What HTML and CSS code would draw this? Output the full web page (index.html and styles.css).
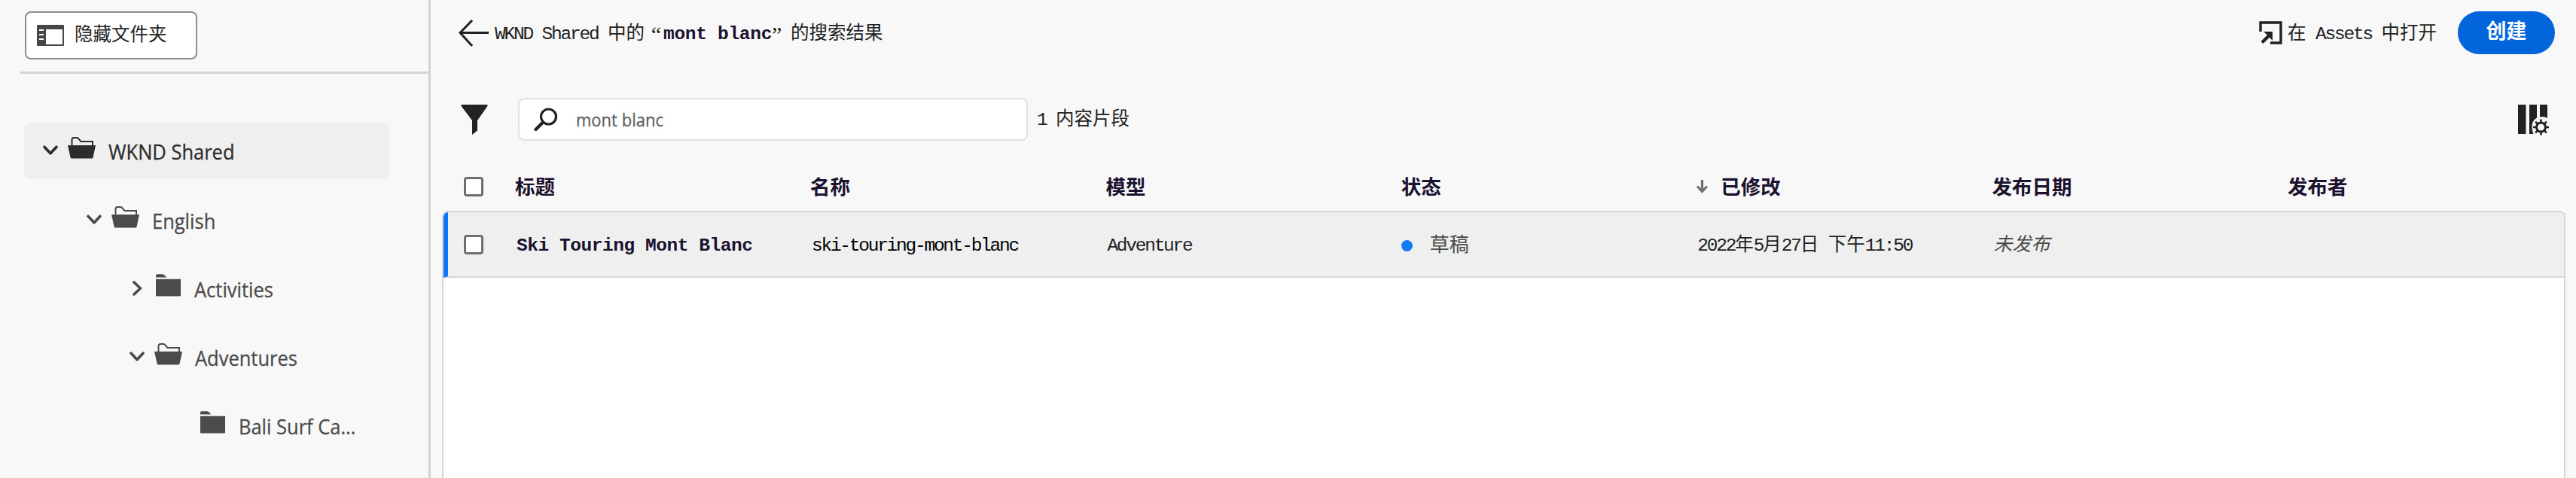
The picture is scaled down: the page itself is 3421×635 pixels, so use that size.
FILE: index.html
```html
<!DOCTYPE html>
<html lang="zh-CN">
<head>
<meta charset="utf-8">
<title>内容片段</title>
<link rel="stylesheet" href="styles.css">
</head>
<body>
<svg class="defs" width="0" height="0">
  <symbol id="open" viewBox="0 0 37 30"><path d="M5.500 13V5q0-3 2.500-3h4q1.200 0 2 1l3.500 4H33v6" fill="none" stroke="currentColor" stroke-width="2"/><path d="M0 12h37l-3.500 16.500q-.3 1-1.300 1H5q-1 0-1.300-1z" fill="currentColor"/></symbol>
  <symbol id="closed" viewBox="0 0 33 30"><path d="M0 4.500V2.200Q0 .2 2 .2h7q1 0 1.800.8L14.500 4.500zM0 6.700h33V28.500q0 1-1 1H1q-1 0-1-1z" fill="currentColor"/></symbol>
  <symbol id="down" viewBox="0 0 20 14"><path d="M2 2.200l8 8.600 8-8.600" fill="none" stroke="currentColor" stroke-width="3.600" stroke-linecap="round" stroke-linejoin="round"/></symbol>
  <symbol id="right" viewBox="0 0 14 20"><path d="M3 2l8.500 8L3 18" fill="none" stroke="currentColor" stroke-width="3.600" stroke-linecap="round" stroke-linejoin="round"/></symbol>
</svg>
<div class="app">
  <aside class="sidebar">
    <div class="side-top">
      <button class="hide-btn">
        <svg width="36" height="28" viewBox="0 0 36 28"><path fill="#464646" fill-rule="evenodd" d="M1 0h34q1 0 1 1v26q0 1-1 1H1q-1 0-1-1V1q0-1 1-1zm11 6v20h22V6zM3 6v2h6V6zm0 6v2h6v-2zm0 6v2h6v-2z"/></svg>
        <span>隐藏文件夹</span>
      </button>
    </div>
    <nav class="tree">
      <div class="node lvl0 selected"><svg class="chev"><use href="#down"/></svg><svg class="folder"><use href="#open"/></svg><span class="label">WKND Shared</span></div>
      <div class="node lvl1"><svg class="chev"><use href="#down"/></svg><svg class="folder"><use href="#open"/></svg><span class="label">English</span></div>
      <div class="node lvl2"><svg class="chev side"><use href="#right"/></svg><svg class="folder shut"><use href="#closed"/></svg><span class="label">Activities</span></div>
      <div class="node lvl2"><svg class="chev"><use href="#down"/></svg><svg class="folder"><use href="#open"/></svg><span class="label">Adventures</span></div>
      <div class="node lvl3"><svg class="folder shut"><use href="#closed"/></svg><span class="label">Bali Surf Ca…</span></div>
    </nav>
  </aside>
  <main class="main">
    <header class="topbar">
      <svg class="back" width="40" height="36" viewBox="0 0 40 36"><path d="M18 1L2 17.500l16 17.500M2 17.500h38" fill="none" stroke="#222" stroke-width="3"/></svg>
      <h1 class="title"><span class="lat">WKND Shared </span><span>中的</span><span class="quote start">“</span><b>mont blanc</b><span class="quote">”</span><span>的搜索结果</span></h1>
      <a class="open-assets">
        <svg width="31" height="31" viewBox="0 0 31 31"><path d="M2 14V2h27v27H15" fill="none" stroke="#222" stroke-width="3.400"/><path d="M6 14h12v12l-4-4.200-8.500 8.200-3-3L11 18.500z" fill="#222"/></svg>
        <span>在<span class="lat"> Assets </span>中打开</span>
      </a>
      <button class="create">创建</button>
    </header>
    <div class="toolbar">
      <svg width="36" height="40" viewBox="0 0 36 40"><path d="M1 0h34q1 1 .4 2L22 21v13.500L15 40V21L.6 2Q0 1 1 0z" fill="#222"/></svg>
      <div class="search">
        <svg width="32" height="32" viewBox="0 0 32 32"><circle cx="19.500" cy="12" r="10" fill="none" stroke="#222" stroke-width="3.200"/><path d="M12 19.500L2.500 29" stroke="#222" stroke-width="4.200" stroke-linecap="round"/></svg>
        <span class="query">mont blanc</span>
      </div>
      <span class="count"><span class="lat">1 </span>内容片段</span>
      <svg class="cols" width="41" height="41" viewBox="0 0 41 41"><path d="M0 0h10.500v39H0zM15 0h10v17.500q-7 4-6.500 13 .2 4 2 8.500H15zM29 0h10v18q-4-2.800-10-1.500z" fill="#222"/><circle cx="30.500" cy="30" r="6" fill="none" stroke="#222" stroke-width="3"/><path d="M30.500 19.500v5M30.500 35.500v5M20 30h5M36 30h5M23.100 22.600l3.300 3.300M34.600 34.100l3.300 3.300M37.900 22.600l-3.300 3.300M26.400 34.100l-3.300 3.300" stroke="#222" stroke-width="2.600"/></svg>
    </div>
    <div class="grid head">
      <span class="box"></span><span>标题</span><span>名称</span><span>模型</span><span>状态</span>
      <span class="sorted"><svg width="15" height="18" viewBox="0 0 15 18"><path d="M7.500 1v14M2 9.500l5.500 6 5.500-6" fill="none" stroke="#6e6e6e" stroke-width="3.200" stroke-linecap="round"/></svg><span>已修改</span></span>
      <span>发布日期</span><span>发布者</span>
    </div>
    <section class="table">
      <div class="grid row">
        <span class="box"></span>
        <b class="name">Ski Touring Mont Blanc</b>
        <span class="slug">ski-touring-mont-blanc</span>
        <span class="model">Adventure</span>
        <span class="status"><i class="dot"></i><span>草稿</span></span>
        <span class="date"><span class="lat">2022</span>年<span class="lat">5</span>月<span class="lat">27</span>日<span class="lat"> </span>下午<span class="lat">11:50</span></span>
        <em>未发布</em>
      </div>
    </section>
  </main>
</div>
</body>
</html>
```
FILE: styles.css
```css
* { box-sizing: border-box; }
body {
  margin: 0;
  background: #f8f8f8;
  color: #222;
  font-family: "Liberation Mono", "Noto Sans CJK SC", monospace;
  font-size: 24.5px;
  line-height: 32px;
}
svg { display: block; flex: none; }
.defs { position: absolute; }
button { font: inherit; color: inherit; }
.app { display: flex; height: 635px; overflow: hidden; }

/* Folder tree */
.sidebar { width: 572px; flex: none; border-right: 3px solid #d3d3d3; padding-left: 27px; }
.side-top { height: 98px; padding: 15px 0 0 6px; border-bottom: 3px solid #d3d3d3; }
.hide-btn {
  display: flex; align-items: center; gap: 14px;
  width: 229px; height: 64px; padding: 0 0 0 14px;
  border: 2px solid #8e8e8e; border-radius: 8px; background: #fff; color: #222;
}
.hide-btn span { padding-top: 2px; }
.tree { padding: 65px 0 0 5px; display: grid; gap: 16.800px; }
.node { display: flex; align-items: center; width: 485px; height: 74.500px; border-radius: 8px; color: #4b4b4b; padding-left: 25px; }
.selected { background: #efefef; color: #2c2c2c; }
.lvl1 { padding-left: 83px; }
.lvl2 { padding-left: 140px; }
.lvl3 { padding-left: 234px; }
.chev { width: 20px; height: 14px; margin-right: 13px; }
.chev.side { width: 14px; height: 20px; margin: 0 17px 0 3px; }
.folder { width: 37px; height: 30px; margin: -8px 17px 0 0; }
.folder.shut { width: 33px; margin: -8px 18px 0 1px; }
.lvl3 .folder.shut { margin: -8px 18px 0 0; }
.label {
  margin-top: 2px;
  font-family: "Open Sans", "Noto Sans", sans-serif; font-size: 28px; white-space: nowrap;
  -webkit-text-stroke: .3px currentColor;
  transform: scaleX(.91); transform-origin: left;
}

/* Search results */
.main { flex: 1; min-width: 0; display: flex; flex-direction: column; padding: 0 14px 0 15px; }
.lat { letter-spacing: -2.200px; white-space: pre; }
.topbar { display: flex; align-items: center; height: 57px; margin-top: 15px; padding: 0 14px 0 22px; }
.title { display: flex; margin: 4px 0 0 8px; font-size: inherit; font-weight: 400; }
.title b { letter-spacing: -.300px; color: #1b1230; }
.quote { width: 25px; font-family: "Liberation Serif", serif; font-size: 30px; }
.start { text-align: right; padding-right: 3px; }
.open-assets { display: flex; align-items: center; gap: 7px; margin-left: auto; }
.open-assets > span { margin-top: 4px; }
.create { width: 129px; height: 57px; margin-left: 28px; border: 0; border-radius: 29px; background: #0265dc; color: #fff; font-weight: 700; font-size: 27px; padding: 0; }
.toolbar { display: flex; align-items: center; height: 57px; margin-top: 58px; padding: 0 22px 0 25px; }
.search { display: flex; align-items: center; width: 677px; height: 57px; margin-left: 40px; padding-left: 19px; border: 2px solid #e1e1e1; border-radius: 8px; background: #fff; }
.query { margin: 1px 0 0 24px; color: #5f5f5f; font-family: "Open Sans", "Noto Sans", sans-serif; font-size: 24px; -webkit-text-stroke: .3px currentColor; transform: scaleX(.917); transform-origin: left; }
.count { margin: 3px 0 0 12px; }
.cols { margin: 2px 0 0 auto; }
.grid { display: grid; grid-template-columns: 68px 392px repeat(6, 392.400px); align-items: center; padding-left: 29px; }
.head { height: 93px; padding-top: 29px; font-weight: 700; font-size: 26.500px; color: #1b1230; }
.head > span:not(.box) { padding-top: 5px; }
.box { width: 26px; height: 26px; border: 3px solid #6e6e6e; border-radius: 4px; background: #fff; }
.sorted { display: flex; align-items: center; gap: 17px; }
.sorted svg { margin-bottom: 6px; }
.table { flex: 1; border: 2px solid #d6d6d6; border-bottom: 0; border-radius: 8px 8px 0 0; background: #fff; overflow: hidden; }
.row { height: 87px; background: #efefef; border-bottom: 2px solid #d6d6d6; border-left: 6px solid #0d76fa; padding-left: 21px; }
.row > :not(.box) { padding-top: 4px; }
.name { color: #1b1230; letter-spacing: -.450px; padding-left: 2px; }
.slug, .model { letter-spacing: -2.250px; padding-left: 2px; }
.slug { color: #000; }
.status { display: flex; align-items: center; color: #4b4b4b; font-size: 26px; }
.dot { width: 15px; height: 15px; margin-right: 23px; border-radius: 50%; background: #147af3; }
.date { padding-left: 1px; }
em { color: #4b4b4b; font-size: 25px; padding-left: 2px; }
```
